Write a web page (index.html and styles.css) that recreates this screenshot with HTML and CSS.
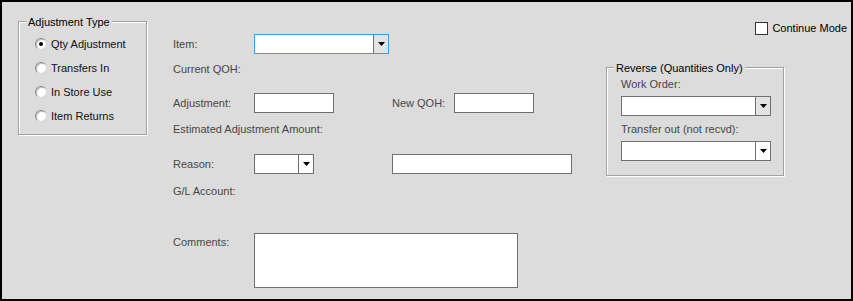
FILE: index.html
```html
<!DOCTYPE html>
<html>
<head>
<meta charset="utf-8">
<link rel="stylesheet" href="styles.css">
</head>
<body>
<div class="frame">
  <div class="group group-type">
    <div class="group-title">Adjustment Type</div>
    <div class="radio-row"><span class="radio checked"></span><span class="radio-text">Qty Adjustment</span></div>
    <div class="radio-row"><span class="radio"></span><span class="radio-text">Transfers In</span></div>
    <div class="radio-row"><span class="radio"></span><span class="radio-text">In Store Use</span></div>
    <div class="radio-row"><span class="radio"></span><span class="radio-text">Item Returns</span></div>
  </div>

  <div class="form">
    <div class="row r-item">
      <span class="label">Item:</span>
      <div class="combo combo-item focused">
        <span class="combo-field"></span>
        <span class="combo-btn shaded"><svg class="arrow" width="7" height="4" viewBox="0 0 7 4"><polygon points="0,0 7,0 3.5,4" fill="#000"/></svg></span>
      </div>
    </div>
    <div class="row r-qoh">
      <span class="label wide">Current QOH:</span>
    </div>
    <div class="row r-adj">
      <span class="label">Adjustment:</span>
      <span class="input input-short"></span>
      <span class="label">New QOH:</span>
      <span class="input input-short"></span>
    </div>
    <div class="row r-est">
      <span class="label wide">Estimated Adjustment Amount:</span>
    </div>
    <div class="row r-reason">
      <span class="label">Reason:</span>
      <div class="combo combo-reason">
        <span class="combo-field"></span>
        <span class="combo-btn"><svg class="arrow" width="7" height="4" viewBox="0 0 7 4"><polygon points="0,0 7,0 3.5,4" fill="#000"/></svg></span>
      </div>
      <span class="input input-long"></span>
    </div>
    <div class="row r-gl">
      <span class="label wide">G/L Account:</span>
    </div>
    <div class="row r-comments">
      <span class="label label-top">Comments:</span>
      <span class="textarea"></span>
    </div>
  </div>

  <div class="side">
    <div class="check-row"><span class="checkbox"></span><span class="check-text">Continue Mode</span></div>
    <div class="group group-reverse">
      <div class="group-title">Reverse (Quantities Only)</div>
      <div class="rev-label rev-first">Work Order:</div>
      <div class="combo combo-rev">
        <span class="combo-field"></span>
        <span class="combo-btn shaded"><svg class="arrow" width="7" height="4" viewBox="0 0 7 4"><polygon points="0,0 7,0 3.5,4" fill="#000"/></svg></span>
      </div>
      <div class="rev-label rev-second">Transfer out (not recvd):</div>
      <div class="combo combo-rev">
        <span class="combo-field"></span>
        <span class="combo-btn"><svg class="arrow" width="7" height="4" viewBox="0 0 7 4"><polygon points="0,0 7,0 3.5,4" fill="#000"/></svg></span>
      </div>
    </div>
  </div>
</div>
</body>
</html>
```

FILE: styles.css
```css
* {
  box-sizing: border-box;
}

html, body {
  margin: 0;
  padding: 0;
  background: #000;
}

body {
  font-family: "Liberation Sans", Arial, sans-serif;
  font-size: 11px;
  line-height: 13px;
  color: #000;
}

.frame {
  width: 853px;
  height: 301px;
  border: 2px solid #000;
  background: #dcdcdc;
  display: flex;
  align-items: flex-start;
}

/* group boxes */
.group {
  border: 1px solid #a0a0a0;
  box-shadow: inset 1px 1px 0 #fff, 1px 1px 0 #fff;
}

.group-title {
  width: fit-content;
  margin: -6px 0 0 7px;
  padding: 0 2px;
  background: #dcdcdc;
  color: #000;
  white-space: nowrap;
}

.group-type {
  width: 129px;
  margin: 19px 0 0 16px;
  padding-bottom: 6px;
}

.radio-row {
  height: 24px;
  display: flex;
  align-items: center;
  padding-left: 16px;
  white-space: nowrap;
}

.radio-row:first-of-type,
.group-title + .radio-row {
  margin-top: 3px;
}

.radio {
  width: 12px;
  height: 12px;
  border-radius: 50%;
  border: 1px solid;
  border-color: #8a8a8a #d8d8d8 #d8d8d8 #8a8a8a;
  background: #fff;
  box-shadow: inset 1px 1px 0 #c0c0c0;
  margin-right: 4px;
  display: flex;
  align-items: center;
  justify-content: center;
  flex: none;
}

.radio.checked::after {
  content: "";
  width: 4px;
  height: 4px;
  border-radius: 50%;
  background: #000;
}

.radio-text {
  color: #101010;
}

/* middle form */
.form {
  width: 399px;
  margin: 32px 0 0 26px;
}

.row {
  display: grid;
  grid-template-columns: 81px 138px 62px 118px;
  height: 20px;
  align-items: center;
}

.r-qoh { margin-top: 5px; }
.r-adj { margin-top: 14px; }
.r-est { margin-top: 6px; }
.r-reason { margin-top: 15px; }
.r-gl { margin-top: 7px; }
.r-comments {
  margin-top: 32px;
  height: 55px;
  align-items: start;
}

.label {
  color: #474747;
  white-space: nowrap;
}

.label.wide {
  grid-column: 1 / -1;
}

.label-top {
  padding-top: 3px;
}

.input {
  height: 20px;
  background: #fff;
  border: 1px solid #707070;
  display: block;
}

.input-short {
  width: 80px;
}

.input-long {
  grid-column: 3 / 5;
  width: 180px;
}

.textarea {
  grid-column: 2 / 5;
  width: 264px;
  height: 55px;
  background: #fff;
  border: 1px solid #707070;
}

/* combo boxes */
.combo {
  display: flex;
  height: 20px;
  background: #fff;
  border: 1px solid #707070;
}

.combo.focused {
  border-color: #3c9ae6;
}

.combo-field {
  flex: 1;
}

.combo-btn {
  width: 15px;
  border-left: 1px solid #707070;
  display: flex;
  align-items: center;
  justify-content: center;
  background: #fff;
}

.combo-btn.shaded {
  background: #e3e3e3;
}

.arrow {
  display: block;
}

.combo-item {
  width: 135px;
}

.combo-reason {
  width: 60px;
}

/* right side */
.side {
  flex: 1;
  margin: 20px 0 0 34px;
  padding-right: 4px;
  display: flex;
  flex-direction: column;
  align-items: flex-start;
}

.check-row {
  align-self: flex-end;
  height: 13px;
  display: flex;
  align-items: center;
  gap: 4px;
  white-space: nowrap;
}

.checkbox {
  width: 13px;
  height: 13px;
  background: #fff;
  border: 1px solid #333;
  flex: none;
}

.check-text {
  color: #000;
}

.group-reverse {
  width: 178px;
  margin-top: 32px;
  padding: 0 11px 14px 14px;
}

.group-reverse .group-title {
  margin-left: -7px;
}

.rev-label {
  color: #474747;
  white-space: nowrap;
}

.rev-first {
  margin-top: 3px;
}

.rev-second {
  margin-top: 7px;
}

.combo-rev {
  width: 150px;
  margin-top: 5px;
}
```
